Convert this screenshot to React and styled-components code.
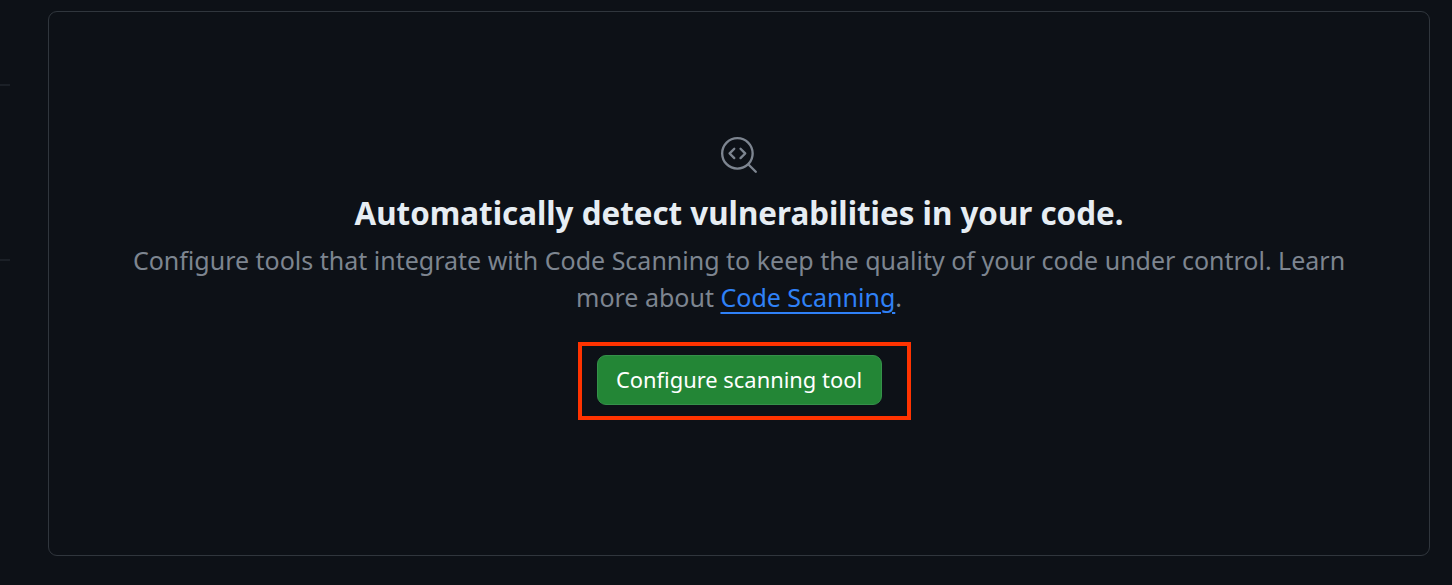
import React from "react";
import styled, { createGlobalStyle } from "styled-components";
import { GoCodescan } from "react-icons/go";

const GlobalStyle = createGlobalStyle`
  *, *::before, *::after { box-sizing: border-box; }
  body {
    margin: 0;
    background: #0d1117;
    font-family: "Noto Sans", sans-serif;
    overflow: hidden;
  }
`;

const Page = styled.div`
  display: flex;
  gap: 38px;
  height: 585px;
  padding: 11px 22px 29px 0;
`;

const Sidebar = styled.aside`
  flex: 0 0 10px;
  padding-top: 73px;
`;

const SidebarGroup = styled.div`
  height: 175px;
  border-top: 2px solid #1b2027;
`;

const Blankslate = styled.section`
  flex: 1;
  display: flex;
  flex-direction: column;
  align-items: center;
  padding: 125px 48px 0;
  border: 1px solid #30363d;
  border-radius: 9px;
  text-align: center;
`;

const ScanIcon = styled(GoCodescan)`
  display: block;
  width: 37.5px;
  height: 37.5px;
  margin: 0 0 0.5px 1px;
  color: #7d8590;
`;

const Title = styled.h2`
  margin: 14px 0 0;
  color: #e6edf3;
  font-size: 31.34px;
  font-weight: 700;
  line-height: 48px;
`;

const Description = styled.p`
  width: 1250px;
  margin: 5px 0 0;
  color: #7d8590;
  font-size: 25px;
  line-height: 37px;
`;

const Link = styled.a`
  color: #2f81f7;
  text-decoration: underline;
  text-decoration-thickness: 2px;
  text-underline-offset: 5px;
`;

const Action = styled.div`
  position: relative;
  margin-top: 39px;
`;

const PrimaryButton = styled.button`
  display: block;
  width: 285px;
  height: 50px;
  padding: 0;
  border: 1px solid #35914a;
  border-radius: 9px;
  background: #238636;
  color: #fff;
  font: 400 21.9px/48px "Noto Sans", sans-serif;
  white-space: nowrap;
`;

const Highlight = styled.span`
  position: absolute;
  inset: -13px -29px -15px -19px;
  border: 4px solid #ff3300;
  pointer-events: none;
`;

export default function App() {
  return (
    <>
      <GlobalStyle />
      <Page>
        <Sidebar>
          <SidebarGroup />
          <SidebarGroup />
        </Sidebar>
        <Blankslate>
          <ScanIcon />
          <Title>Automatically detect vulnerabilities in your code.</Title>
          <Description>
            Configure tools that integrate with Code Scanning to keep the quality of your code
            under control. Learn more about <Link href="#">Code Scanning</Link>.
          </Description>
          <Action>
            <PrimaryButton type="button">Configure scanning tool</PrimaryButton>
            <Highlight />
          </Action>
        </Blankslate>
      </Page>
    </>
  );
}
